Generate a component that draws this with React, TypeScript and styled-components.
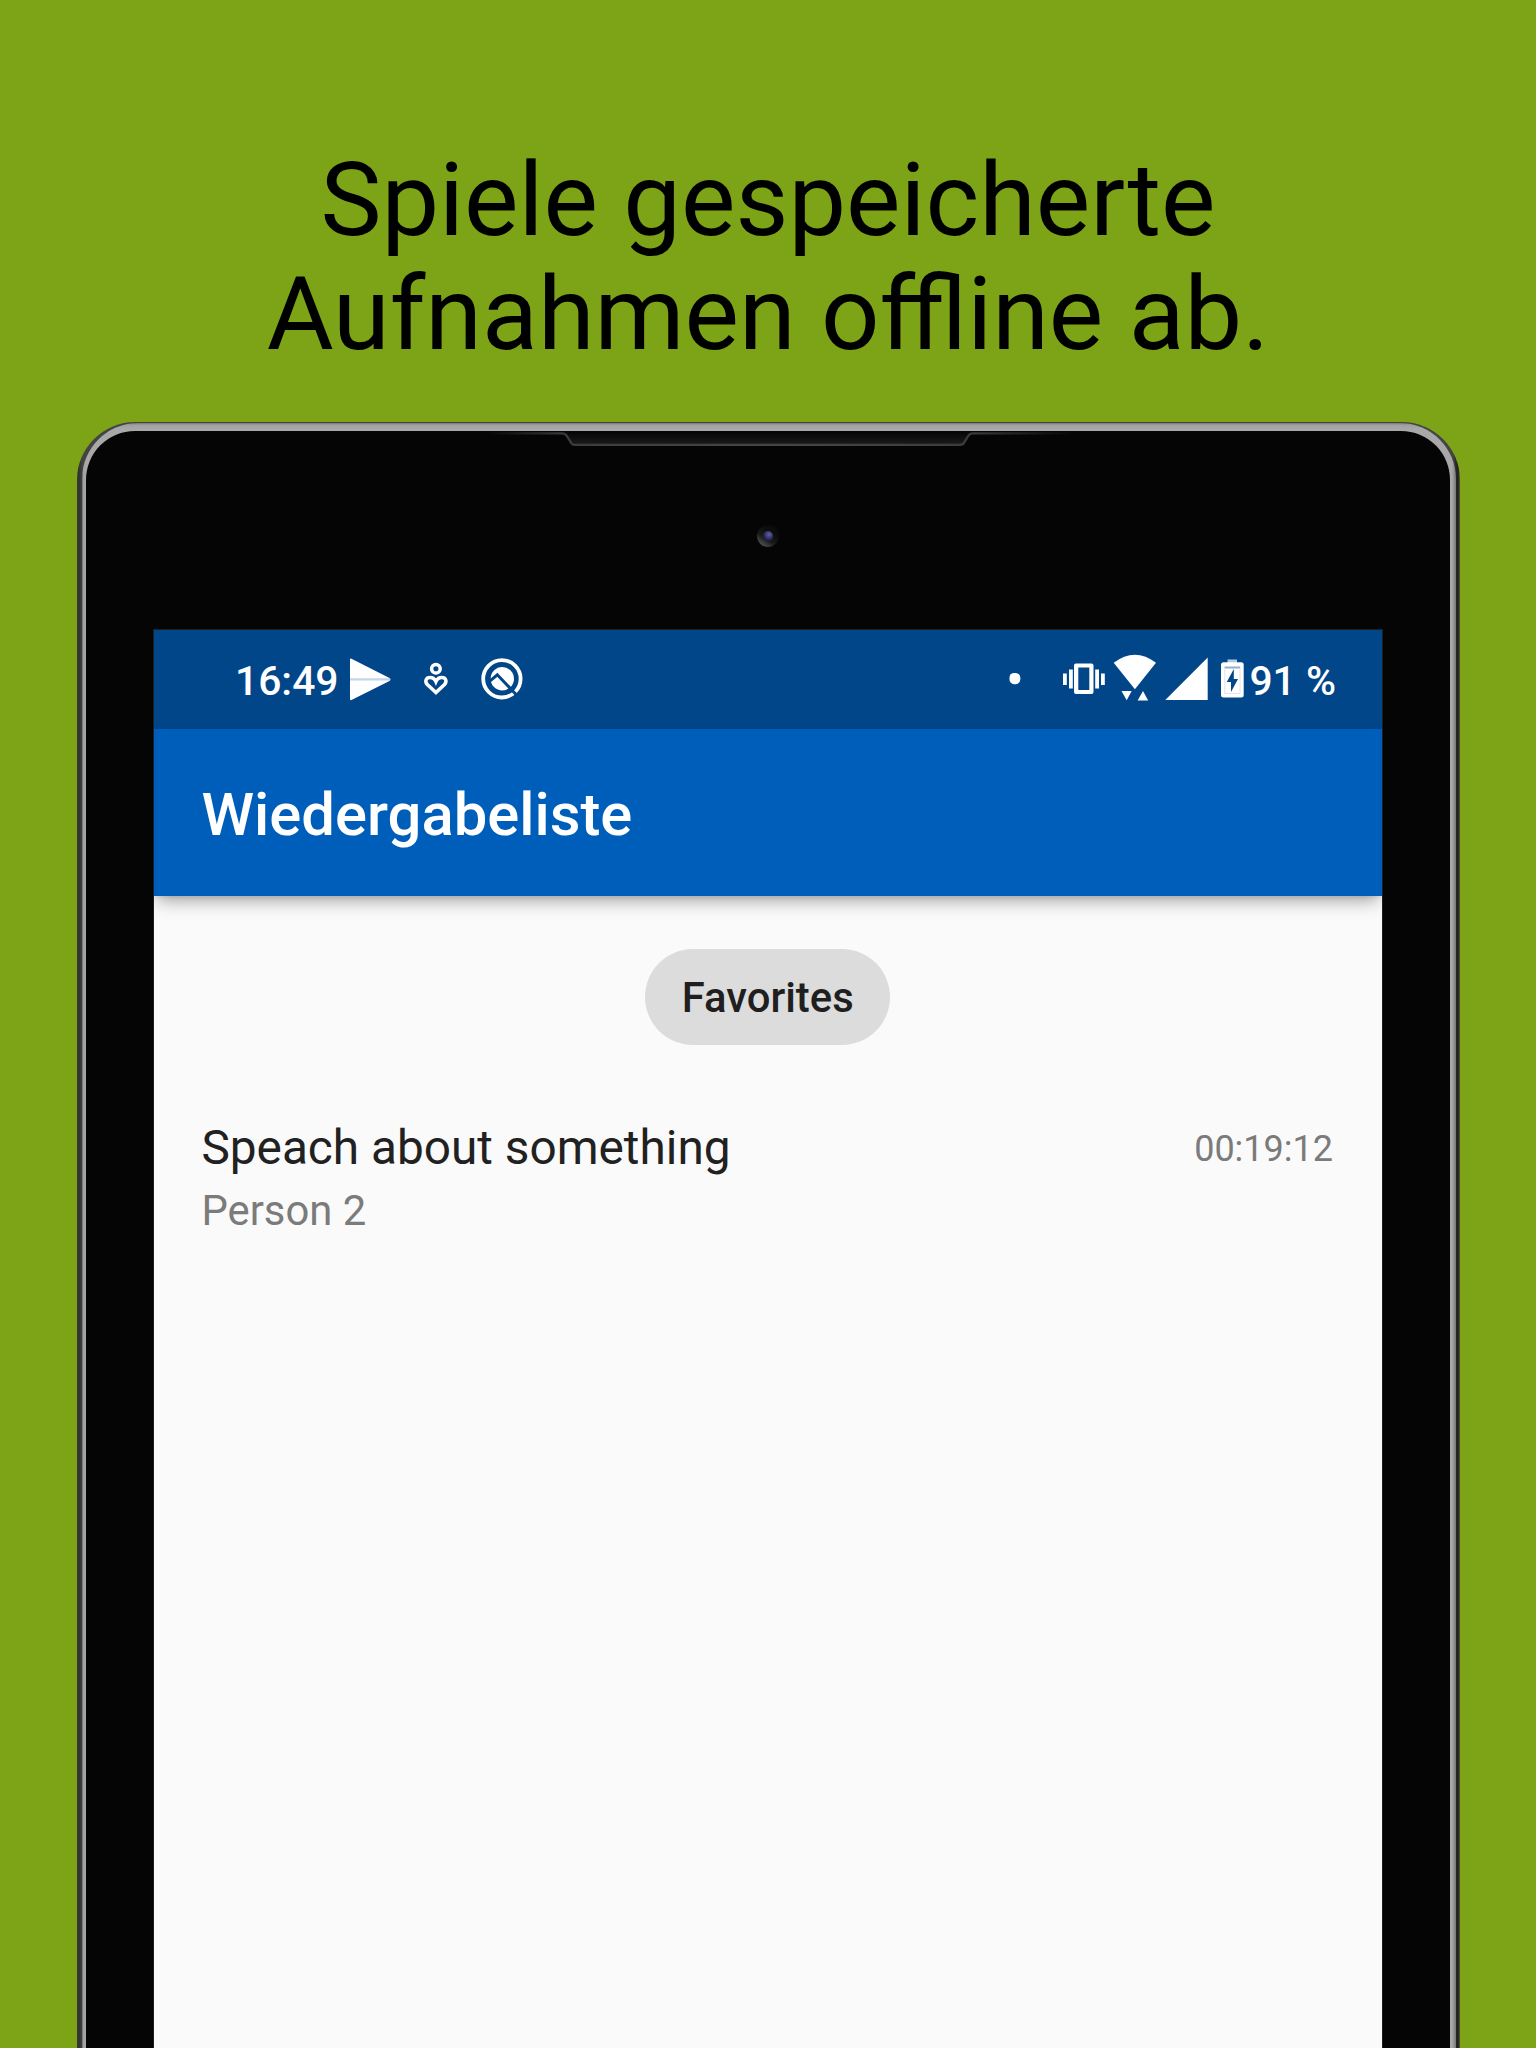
import React from 'react';
import styled, { createGlobalStyle } from 'styled-components';

const GlobalStyle = createGlobalStyle`
  * { box-sizing: border-box; }
  html, body { margin: 0; background: #7da317; }
  body { font-family: Roboto, 'Liberation Sans', sans-serif; }
`;

const Page = styled.main`
  display: flex;
  flex-direction: column;
  width: 1536px;
  height: 2048px;
  overflow: hidden;
  padding-top: 143px;
  background: #7da317;
`;

const Headline = styled.h1`
  flex: none;
  height: 279px;
  margin: 0;
  font-size: 102.67px;
  font-weight: 400;
  line-height: 114px;
  text-align: center;
  white-space: nowrap;
  color: #000;
`;

const DeviceRim = styled.section`
  flex: none;
  width: 1382.5px;
  height: 1800px;
  margin-left: 77px;
  padding: 1px 3.5px 0 5px;
  border-radius: 58px 58px 0 0;
  background: linear-gradient(90deg, #3d4432 0, #2f2f2f 1px, #3a3a3a 4px, #444 5px, #444 1376px, #2a2a2a 1379px, #1d1d1d 1381px, #444b2c 1382.5px);
`;

const DeviceEdge = styled.div`
  height: 100%;
  padding: 8px 6px 0 4px;
  border-radius: 56px 56px 0 0;
  background:
    linear-gradient(90deg, #666 0, #a3a3a3 1.5px, #a3a3a3 3px, rgba(163, 163, 163, 0) 4px),
    linear-gradient(90deg, rgba(120, 120, 120, 0) 1370px, #777 1374px),
    linear-gradient(180deg, #777 0, #a0a0a0 2px, #a8a8a8 6px, #a8a8a8 100%);
`;

const Bezel = styled.div`
  position: relative;
  display: flex;
  flex-direction: column;
  height: 100%;
  padding: 199px 68px 0;
  border-radius: 49px 49px 0 0;
  background: #050505;
`;

const SpeakerSlot = styled.svg`
  position: absolute;
  top: 0;
  left: 394px;
`;

const Camera = styled.svg`
  position: absolute;
  top: 92.5px;
  left: 669.8px;
`;

const Screen = styled.div`
  flex: 1;
  display: flex;
  flex-direction: column;
  overflow: hidden;
  background: #fafafa;
  box-shadow: 0 0 0 1px #1c1e22;
`;

const StatusBar = styled.header`
  flex: none;
  display: flex;
  justify-content: space-between;
  height: 99px;
  padding: 0 46px 1px 81px;
  background: #004689;
`;

const StatusGroup = styled.div`
  display: flex;
  align-items: center;
`;

const StatusText = styled.span<{ $gap?: number }>`
  margin-left: ${(p) => p.$gap ?? 0}px;
  padding-top: 4px;
  font-size: 40.8px;
  font-weight: 500;
  line-height: 48px;
  white-space: nowrap;
  color: #fff;
`;

const StatusIcon = styled.svg<{ $gap: number }>`
  flex: none;
  display: block;
  margin-left: ${(p) => p.$gap}px;
`;

const AppBar = styled.div`
  position: relative;
  flex: none;
  display: flex;
  align-items: center;
  height: 167px;
  padding: 5px 48px 0 47.5px;
  background: #005ebb;
  box-shadow: 0 9px 16px -4px rgba(0, 0, 0, 0.34), 0 2px 5px -1px rgba(0, 0, 0, 0.1);
`;

const AppTitle = styled.h2`
  margin: 0;
  font-size: 59.75px;
  font-weight: 500;
  line-height: 70px;
  color: #fff;
`;

const Content = styled.div`
  display: flex;
  flex-direction: column;
  align-items: center;
  padding: 53px 48px 0 47.4px;
`;

const Chip = styled.button`
  width: 245px;
  height: 96px;
  padding: 2px 0 0;
  border: 0;
  border-radius: 48px;
  background: #dcdcdc;
  font: 500 41.8px/48px Roboto, 'Liberation Sans', sans-serif;
  color: #1f1f1f;
`;

const Recording = styled.article`
  display: flex;
  justify-content: space-between;
  align-items: flex-start;
  align-self: stretch;
  margin-top: 75px;
`;

const RecordingInfo = styled.div`
  display: flex;
  flex-direction: column;
  gap: 11px;
`;

const RecordingTitle = styled.h3`
  margin: 0;
  font-size: 47.75px;
  font-weight: 400;
  line-height: 56px;
  color: #212121;
`;

const RecordingPerson = styled.p`
  margin: 0;
  font-size: 41.8px;
  line-height: 48px;
  color: #7b7b7b;
`;

const Duration = styled.time`
  padding: 8px 1px 0 0;
  font-size: 36px;
  line-height: 42px;
  color: #7b7b7b;
`;

export default function App() {
  return (
    <>
      <GlobalStyle />
      <Page>
        <Headline>
          Spiele gespeicherte
          <br />
          Aufnahmen offline ab.
        </Headline>
        <DeviceRim>
          <DeviceEdge>
            <Bezel>
              <SpeakerSlot width="600" height="22" viewBox="480 431 600 22" fill="none">
                <defs>
                  <linearGradient id="slot" x1="0" y1="0" x2="0" y2="1">
                    <stop offset="0" stopColor="#060606" />
                    <stop offset="1" stopColor="#1c1c1c" />
                  </linearGradient>
                  <linearGradient id="fade" gradientUnits="userSpaceOnUse" x1="485" y1="0" x2="1075" y2="0">
                    <stop offset="0" stopColor="#3c3c3c" stopOpacity="0" />
                    <stop offset=".14" stopColor="#3c3c3c" />
                    <stop offset=".5" stopColor="#464646" />
                    <stop offset=".82" stopColor="#3c3c3c" />
                    <stop offset="1" stopColor="#3c3c3c" stopOpacity="0" />
                  </linearGradient>
                </defs>
                <path d="M565 432l8.500 13.500H963l7.500-13.500z" fill="url(#slot)" />
                <path d="M487 433.300h75q3.500 0 5 3l4.500 7q1 1.500 3 1.500H960q3 0 4-2l4-6.500q1.500-3 5-3h100" stroke="url(#fade)" strokeWidth="2.300" />
              </SpeakerSlot>
              <Camera width="24" height="24" viewBox="0 0 24 24">
                <defs>
                  <linearGradient id="ring" x1=".2" y1=".95" x2=".65" y2=".3">
                    <stop offset="0" stopColor="#555" />
                    <stop offset=".5" stopColor="#191919" />
                    <stop offset="1" stopColor="#0c0c0c" />
                  </linearGradient>
                  <radialGradient id="lens" cx=".6" cy=".35" r=".7">
                    <stop offset="0" stopColor="#62629c" />
                    <stop offset=".6" stopColor="#2f3064" />
                    <stop offset="1" stopColor="#171733" />
                  </radialGradient>
                </defs>
                <circle cx="12" cy="12" r="11" fill="url(#ring)" />
                <circle cx="12" cy="12" r="5" fill="url(#lens)" />
              </Camera>
              <Screen>
                <StatusBar>
                  <StatusGroup>
                    <StatusText>16:49</StatusText>
                    <StatusIcon $gap={10} width="43" height="43" viewBox="0 0 43 43">
                      <path d="M1 1.500Q1 .2 2.500 .7L40.500 20Q42.500 21.500 40.500 23L2.500 42Q1 42.500 1 41z" fill="#fff" />
                      <path d="M1 21.400H41" stroke="#c3d5e6" strokeWidth="2.200" />
                    </StatusIcon>
                    <StatusIcon $gap={31} width="26" height="34" viewBox="423 662.500 26 34" fill="none" stroke="#fff" strokeWidth="3.500">
                      <circle cx="435.900" cy="669.300" r="4.300" />
                      <path d="M435.900 693L427.300 685C424.500 681.800 426 677.900 430 677.900C433 677.900 435 679.900 435.900 682C436.800 679.900 438.800 677.900 441.800 677.900C445.800 677.900 447.300 681.800 444.500 685z" />
                    </StatusIcon>
                    <StatusIcon $gap={31} width="44" height="44" viewBox="480 657.500 44 44" fill="none">
                      <circle cx="501.900" cy="679.300" r="18.700" stroke="#fff" strokeWidth="3.800" />
                      <circle cx="502.300" cy="679.300" r="11.700" fill="#fff" />
                      <path d="M488 683.200L497.300 675.300L518 697" stroke="#004689" strokeWidth="3" />
                    </StatusIcon>
                  </StatusGroup>
                  <StatusGroup>
                    <StatusIcon $gap={0} width="12" height="12" viewBox="0 0 12 12">
                      <rect x=".5" y="0" width="10.800" height="11.200" rx="4.600" fill="#fff" />
                    </StatusIcon>
                    <StatusIcon $gap={41} width="44" height="32" viewBox="1062 663.500 44 32" fill="#fff">
                      <rect x="1063" y="674" width="3.800" height="11.500" />
                      <rect x="1069" y="670" width="3.800" height="19" />
                      <path fillRule="evenodd" d="M1076 664h15.500q2 0 2 2v26.500q0 2-2 2h-15.500q-2 0-2-2v-26.500q0-2 2-2zM1078.300 668v22.500h11V668z" />
                      <rect x="1095.200" y="670" width="3.800" height="19" />
                      <rect x="1101" y="674" width="3.800" height="11.500" />
                    </StatusIcon>
                    <StatusIcon $gap={7} width="44" height="50" viewBox="1113 654.500 44 50" fill="#fff">
                      <path d="M1113.700 663.200Q1134.900 647.200 1156 663.200L1134.900 689.800z" />
                      <path d="M1121.500 691.500h10.200l-5 9.200zM1137.600 701h10.600l-5.200-9.500z" />
                    </StatusIcon>
                    <StatusIcon $gap={8} width="43" height="44" viewBox="1165 657 43 44" fill="#fff">
                      <path d="M1207.700 657.500V700H1165.300z" />
                    </StatusIcon>
                    <StatusIcon $gap={12} width="25" height="40" viewBox="1220 659.500 25 40">
                      <rect x="1227.500" y="660" width="9.500" height="4" fill="#b6cade" />
                      <rect x="1221" y="662.700" width="22.700" height="35.300" rx="2.500" fill="#fff" />
                      <path d="M1224.500 668H1240.200" stroke="#8fafcc" strokeWidth="2" />
                      <path d="M1224.800 669V694H1240V669" fill="none" stroke="#dce6f0" strokeWidth="1" />
                      <path d="M1233.800 669.500L1226.800 682.500H1231V692.500L1238 679.500H1233.800z" fill="#004689" />
                    </StatusIcon>
                    <StatusText $gap={4}>91 %</StatusText>
                  </StatusGroup>
                </StatusBar>
                <AppBar>
                  <AppTitle>Wiedergabeliste</AppTitle>
                </AppBar>
                <Content>
                  <Chip type="button">Favorites</Chip>
                  <Recording>
                    <RecordingInfo>
                      <RecordingTitle>Speach about something</RecordingTitle>
                      <RecordingPerson>Person 2</RecordingPerson>
                    </RecordingInfo>
                    <Duration>00:19:12</Duration>
                  </Recording>
                </Content>
              </Screen>
            </Bezel>
          </DeviceEdge>
        </DeviceRim>
      </Page>
    </>
  );
}
